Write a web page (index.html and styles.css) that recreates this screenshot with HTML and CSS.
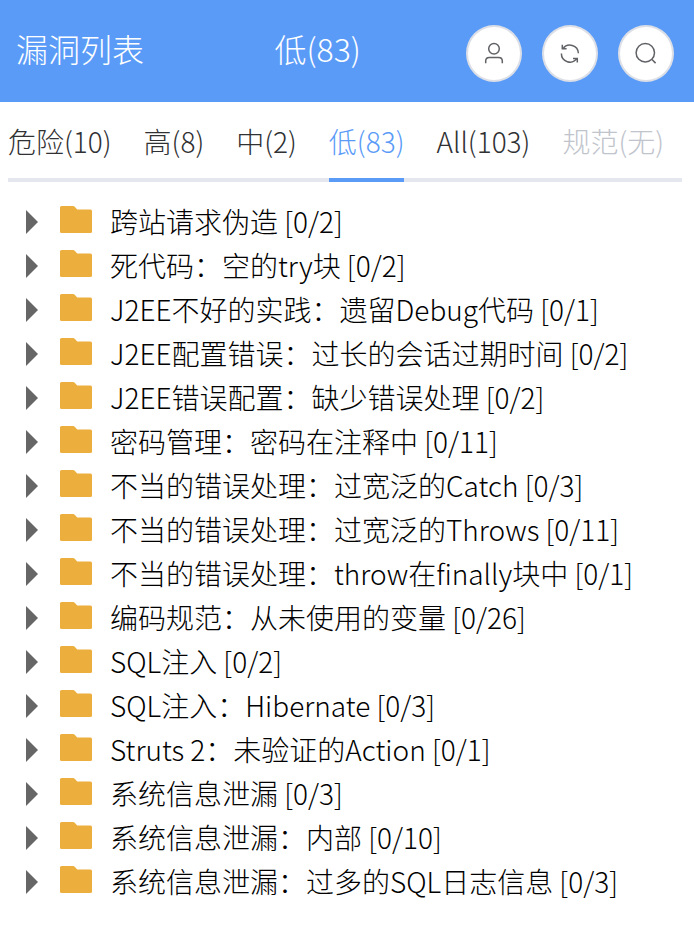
FILE: index.html
```html
<!DOCTYPE html>
<html lang="zh-CN">
<head>
<meta charset="utf-8">
<title>漏洞列表</title>
<link rel="stylesheet" href="styles.css">
</head>
<body>
<header class="header">
  <h1 class="title">漏洞列表</h1>
  <span class="level">低(83)</span>
  <div class="actions">
    <button class="action" aria-label="用户"><svg viewBox="0 0 56 56"><circle cx="28" cy="22.8" r="5.3"/><path d="M19.7 37.300v-2.200q0-3.600 3.600-3.600h9.400q3.600 0 3.600 3.600v2.200"/></svg></button>
    <button class="action" aria-label="刷新"><svg viewBox="0 0 56 56"><path d="M36.400 27.300a8.500 8.500 0 0 0-15.500-4.500M20.300 18.700v4.100h4.300M19.400 27.500a8.500 8.500 0 0 0 15.500 4.900M31 32.400h4.300v4.100"/></svg></button>
    <button class="action" aria-label="搜索"><svg viewBox="0 0 56 56"><circle cx="27.300" cy="26.800" r="9.200"/><path d="m34 33.500 3.600 3.600"/></svg></button>
  </div>
</header>
<nav class="tabs">
  <a class="tab">危险(10)</a>
  <a class="tab">高(8)</a>
  <a class="tab">中(2)</a>
  <a class="tab active">低(83)</a>
  <a class="tab">All(103)</a>
  <a class="tab disabled">规范(无)</a>
</nav>
<svg class="symbols" width="0" height="0"><symbol id="folder" viewBox="0 0 32 28"><path d="M1.5 0H13q1 0 1.7.8l2.5 2.7h13.3Q32 3.5 32 5v20.5q0 1.5-1.5 1.5h-29Q0 27 0 25.500V1.500Q0 0 1.500 0z"/></symbol></svg>
<ul class="tree">
  <li class="node"><i class="arrow"></i><svg class="folder"><use href="#folder"/></svg><span>跨站请求伪造 [0/2]</span></li>
  <li class="node"><i class="arrow"></i><svg class="folder"><use href="#folder"/></svg><span>死代码：空的try块 [0/2]</span></li>
  <li class="node"><i class="arrow"></i><svg class="folder"><use href="#folder"/></svg><span>J2EE不好的实践：遗留Debug代码 [0/1]</span></li>
  <li class="node"><i class="arrow"></i><svg class="folder"><use href="#folder"/></svg><span>J2EE配置错误：过长的会话过期时间 [0/2]</span></li>
  <li class="node"><i class="arrow"></i><svg class="folder"><use href="#folder"/></svg><span>J2EE错误配置：缺少错误处理 [0/2]</span></li>
  <li class="node"><i class="arrow"></i><svg class="folder"><use href="#folder"/></svg><span>密码管理：密码在注释中 [0/11]</span></li>
  <li class="node"><i class="arrow"></i><svg class="folder"><use href="#folder"/></svg><span>不当的错误处理：过宽泛的Catch [0/3]</span></li>
  <li class="node"><i class="arrow"></i><svg class="folder"><use href="#folder"/></svg><span>不当的错误处理：过宽泛的Throws [0/11]</span></li>
  <li class="node"><i class="arrow"></i><svg class="folder"><use href="#folder"/></svg><span>不当的错误处理：throw在finally块中 [0/1]</span></li>
  <li class="node"><i class="arrow"></i><svg class="folder"><use href="#folder"/></svg><span>编码规范：从未使用的变量 [0/26]</span></li>
  <li class="node"><i class="arrow"></i><svg class="folder"><use href="#folder"/></svg><span>SQL注入 [0/2]</span></li>
  <li class="node"><i class="arrow"></i><svg class="folder"><use href="#folder"/></svg><span>SQL注入：Hibernate [0/3]</span></li>
  <li class="node"><i class="arrow"></i><svg class="folder"><use href="#folder"/></svg><span>Struts 2：未验证的Action [0/1]</span></li>
  <li class="node"><i class="arrow"></i><svg class="folder"><use href="#folder"/></svg><span>系统信息泄漏 [0/3]</span></li>
  <li class="node"><i class="arrow"></i><svg class="folder"><use href="#folder"/></svg><span>系统信息泄漏：内部 [0/10]</span></li>
  <li class="node"><i class="arrow"></i><svg class="folder"><use href="#folder"/></svg><span>系统信息泄漏：过多的SQL日志信息 [0/3]</span></li>
</ul>
</body>
</html>
```
FILE: styles.css
```css
* { box-sizing: border-box; }
body {
  margin: 0;
  background: #fff;
  color: #000;
  font: 300 28px "Noto Sans CJK SC", sans-serif;
  white-space: nowrap;
}
.header {
  display: grid;
  grid-template-columns: 258.5px 1fr auto;
  height: 102px;
  padding: 25px 20px 0 16px;
  background: #5b9bf8;
  color: #fff;
  font-size: 32px;
  line-height: 46px;
}
.title { margin: 0; font-size: 32px; font-weight: 300; }
.actions { display: flex; gap: 20px; }
.action {
  width: 56px;
  height: 57px;
  padding: 0;
  border: 2px solid #dcdfe6;
  border-radius: 50%;
  background: #fff;
}
.action svg {
  display: block;
  width: 56px;
  height: 56px;
  margin: -2px;
  fill: none;
  stroke: #606266;
  stroke-width: 1.5;
}
.tabs {
  display: flex;
  gap: 32px;
  height: 80px;
  margin: 0 12px 0 8px;
  border-bottom: 4px solid #e4e7ed;
  color: #303133;
  line-height: 78px;
}
.tab { height: 80px; }
.active { border-bottom: 4px solid #5b9bf8; color: #5b9bf8; }
.disabled { color: #c0c4cc; }
.symbols { display: block; }
.tree { margin: 18px 0 0; padding: 0; list-style: none; }
.node { display: flex; height: 44px; line-height: 42px; }
.arrow {
  width: 12px;
  height: 24px;
  margin: 10px 22px 0 26px;
  background: #666;
  clip-path: polygon(0 0, 100% 50%, 0 100%);
}
.folder { width: 32px; height: 28px; margin: 6px 18px 0 0; fill: #ecae3c; }
```
